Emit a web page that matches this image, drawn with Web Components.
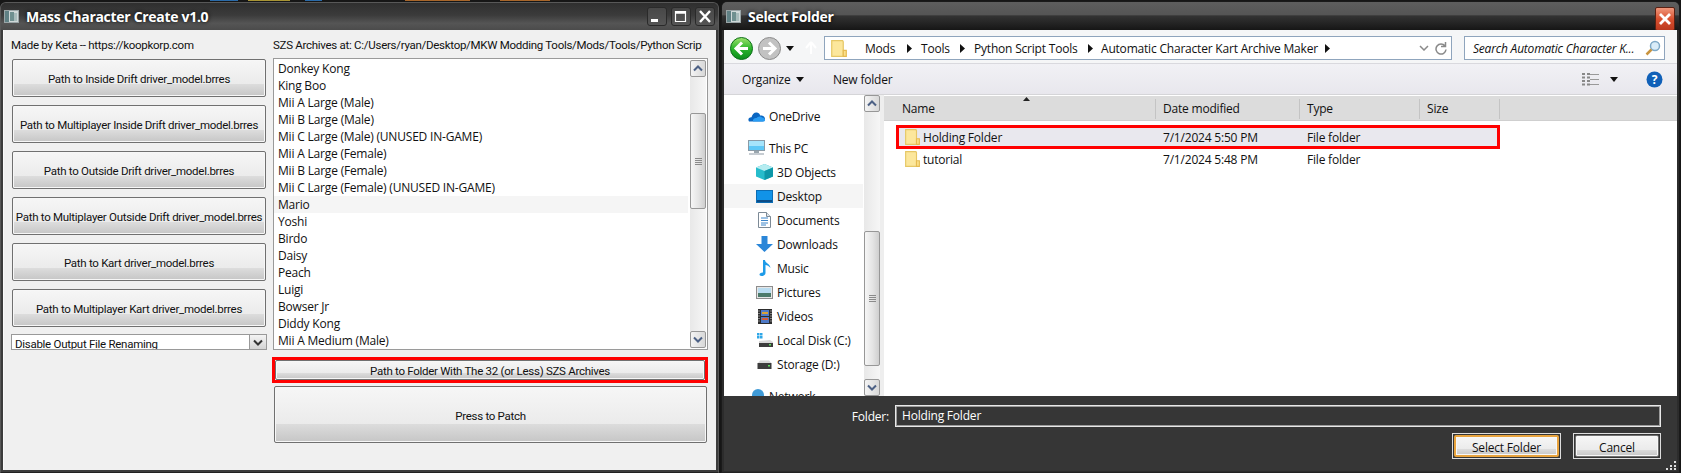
<!DOCTYPE html>
<html><head><meta charset="utf-8"><style>
html,body{margin:0;padding:0;background:#161616;overflow:hidden}
body{width:1681px;height:473px;font:12px "Open Sans","Noto Sans",sans-serif;color:#111;letter-spacing:-.2px;
 background-image:linear-gradient(90deg,transparent 210px,#2a6aa8 210px,#2a6aa8 238px,transparent 238px,transparent 248px,#a89434 248px,#a89434 290px,transparent 290px,transparent 305px,#2a6aa8 305px,#2a6aa8 322px,transparent 322px,transparent 405px,#a8662a 405px,#a8662a 470px,transparent 470px,transparent 500px,#a8662a 500px,#a8662a 550px,transparent 550px);background-size:100% 1px;background-repeat:no-repeat}
#desk{display:flex;gap:2px;height:473px;align-items:flex-start}
</style></head><body>
<div id="desk">
<win-frame width="719" title-text="Mass Character Create v1.0" variant="tool">
  <mass-app></mass-app>
</win-frame>
<win-frame width="959" title-text="Select Folder" variant="dialog">
  <folder-dialog></folder-dialog>
</win-frame>
</div>
<script>
function def(name,html,init){
  customElements.define(name,class extends HTMLElement{
    constructor(){super();this.attachShadow({mode:'open'});}
    connectedCallback(){ if(this._d)return; this._d=1;
      const f=typeof html==='function'?html(this):html;
      this.shadowRoot.innerHTML=f;
      if(init)init(this);
    }
  });
}
const appIcon=`<svg width="15" height="13" viewBox="0 0 15 13" style="flex:none"><rect width="15" height="13" fill="#9aa5a7"/><rect x="1" y="1" width="4" height="11" fill="#5f8084"/><rect x="5" y="1" width="9" height="11" fill="#cfd8d8"/><rect x="6" y="2" width="4" height="9" fill="#6f9090"/><rect x="10" y="3" width="3" height="8" fill="#a8bcbc"/></svg>`;
def('win-frame',h=>{
  const w=h.getAttribute('width'),t=h.getAttribute('title-text'),v=h.getAttribute('variant');
  const tool=v==='tool';
  const ctl=tool?`<div class="ctl">
    <span class="cb"><svg width="18" height="17" viewBox="0 0 18 17"><rect x="3" y="11" width="7" height="3" fill="#fff"/></svg></span>
    <span class="cb"><svg width="18" height="17" viewBox="0 0 18 17"><path d="M3.500 3.500h10v10h-10z" fill="none" stroke="#fff" stroke-width="1.200"/><path d="M3.500 4.500h10" stroke="#fff" stroke-width="2.400"/></svg></span>
    <span class="cb"><svg width="18" height="17" viewBox="0 0 18 17"><path d="M4 3l10 11M14 3L4 14" stroke="#fff" stroke-width="2.400" fill="none"/></svg></span>
  </div>`:`<div class="ctl d"><span class="close"><svg width="18" height="22" viewBox="0 0 18 22"><path d="M4 6l10 10M14 6L4 16" stroke="#fff" stroke-width="2.800" fill="none"/></svg></span></div>`;
  return `<style>
  :host{display:flex;flex-direction:column;flex:none;width:${w}px;box-sizing:border-box;height:${tool?471:472}px;margin-top:${tool?2:1}px;border:1px solid ${tool?'#585858':'#1a1a1a'};border-bottom-color:#222;border-radius:6px 6px 0 0;background:${tool?'#3c3c3c':'#2c2c2c'};overflow:hidden}
  .bar{flex:none;height:${tool?27:28}px;display:flex;align-items:center;padding:0 ${tool?3:4}px 0 ${tool?3:4}px;gap:7px;
    background:${tool?'linear-gradient(#2f2f2f,#3b3b3b 45%,#555 75%,#4b4b4b)':'linear-gradient(#5e5e5e,#555 45%,#333 50%,#161616)'}}
  .t{flex:1;color:#fff;font:bold 14px "Open Sans",sans-serif;letter-spacing:-.3px;text-shadow:0 0 4px #000}
  .ctl{display:flex;gap:4px;align-self:flex-start;margin-top:${tool?4:5}px}
  .cb{width:20px;height:19px;border:1px solid #2a2a2a;border-radius:3px;box-sizing:border-box;background:linear-gradient(#484848,#555);display:flex;align-items:center;justify-content:center}
  .cb svg{flex:none}
  .close{width:20px;height:24px;background:linear-gradient(#f0987c,#d9502f 50%,#bb3a20);border:1px solid #5a2113;box-sizing:border-box;border-radius:2px;display:flex;align-items:center;justify-content:center}
  .body{flex:1;min-height:0;margin:0 2px ${tool?2:1}px;display:flex;flex-direction:column;overflow:hidden}
  </style><div class="bar">${appIcon}<span class="t">${t}</span>${ctl}</div><div class="body"><slot></slot></div>`;
});
def('win-btn',()=>`<style>
  :host{display:flex;box-sizing:border-box;align-items:center;justify-content:center;padding-top:2px;border:1px solid #707070;border-radius:2px;
    background:linear-gradient(#f6f6f6,#ebebeb 68%,#dcdcdc 68%,#c6c6c6);box-shadow:inset 0 0 0 1px #f7f7f7;color:#111;white-space:nowrap}
  </style><slot></slot>`);
def('scroll-bar',h=>{
  const tt=+h.getAttribute('thumb-top'),th=+h.getAttribute('thumb-height');
  return `<style>
  :host{display:flex;flex-direction:column;flex:none;width:16px;box-sizing:border-box;background:linear-gradient(90deg,#e8e8e8,#f6f6f6);overflow:hidden}
  .b{flex:none;height:17px;border:1px solid #979797;border-radius:2px;box-sizing:border-box;background:linear-gradient(90deg,#f4f4f4,#d8d8d8);display:flex;align-items:center;justify-content:center}
  .track{flex:1;min-height:0;padding-top:${tt}px}
  .thumb{height:${th}px;border:1px solid #979797;border-radius:2px;box-sizing:border-box;background:linear-gradient(90deg,#f6f6f6,#e4e4e4 55%,#cfcfcf);display:flex;align-items:center;justify-content:center}
  </style>
  <div class="b"><svg width="10" height="7" viewBox="0 0 10 7"><path d="M1 5.500l4-4 4 4" fill="none" stroke="#4d6185" stroke-width="2"/></svg></div>
  <div class="track"><div class="thumb"><svg width="7" height="7" viewBox="0 0 7 7"><path d="M0 .5h7M0 2.500h7M0 4.500h7M0 6.500h7" stroke="#8a8a8a"/></svg></div></div>
  <div class="b"><svg width="10" height="7" viewBox="0 0 10 7"><path d="M1 1.500l4 4 4-4" fill="none" stroke="#4d6185" stroke-width="2"/></svg></div>`;
});
def('mass-app',()=>{
  const btns=['Path to Inside Drift driver_model.brres','Path to Multiplayer Inside Drift driver_model.brres','Path to Outside Drift driver_model.brres','Path to Multiplayer Outside Drift driver_model.brres','Path to Kart driver_model.brres','Path to Multiplayer Kart driver_model.brres'];
  const items=['Donkey Kong','King Boo','Mii A Large (Male)','Mii B Large (Male)','Mii C Large (Male) (UNUSED IN-GAME)','Mii A Large (Female)','Mii B Large (Female)','Mii C Large (Female) (UNUSED IN-GAME)','Mario','Yoshi','Birdo','Daisy','Peach','Luigi','Bowser Jr','Diddy Kong','Mii A Medium (Male)'];
  return `<style>
  :host{display:grid;flex:1;min-height:0;background:#f0f0f0;grid-template-columns:256px 436px;column-gap:6px;padding:0 0 0 7px;font:11.5px Roboto,"Open Sans",sans-serif;letter-spacing:-.28px;color:#111;border-left:1px solid #fafafa}
  .left,.right{display:flex;flex-direction:column;min-width:0}
  .lbl{height:28px;line-height:30px;white-space:nowrap;overflow:hidden;flex:none}
  .left .lbl{height:29px}
  .btns{display:flex;flex-direction:column;gap:8px;padding:0 1px}
  win-btn.p{height:38px}
  .combo{margin-top:7px;height:16px;border:1px solid #999;box-sizing:border-box;background:#fff;display:flex;overflow:hidden}
  .combo span{flex:1;padding-left:3px;line-height:18px;height:14px;overflow:hidden;white-space:nowrap}
  .drop{flex:none;width:16px;border-left:1px solid #999;background:linear-gradient(#f4f4f4,#d4d4d4);display:flex;align-items:center;justify-content:center}
  .listbox{height:292px;border:1px solid #9a9a9a;box-sizing:border-box;background:#fff;display:flex;width:435px;flex:none}
  .listbox scroll-bar{margin:1px 1px 1px 2px}
  .rows{flex:1;min-width:0;overflow:hidden;padding-top:1px;font:12px "Open Sans",sans-serif;letter-spacing:-.2px}
  .row{height:17px;line-height:17px;padding-left:4px;white-space:nowrap}
  .row.h{background:#f5f5f5}
  .red{margin-top:7px;border:3px solid #f00;height:26px;box-sizing:border-box;width:436px;margin-left:-1px;flex:none;display:flex}
  .red win-btn{flex:1}
  .patch{margin:3px 0 0 1px;height:57px;width:433px;flex:none}
  </style>
  <div class="left"><div class="lbl">Made by Keta -- https://koopkorp.com</div>
   <div class="btns">${btns.map(b=>`<win-btn class="p">${b}</win-btn>`).join('')}</div>
   <div class="combo"><span>Disable Output File Renaming</span><div class="drop"><svg width="10" height="7" viewBox="0 0 10 7"><path d="M1 1.500l4 4 4-4" fill="none" stroke="#333" stroke-width="2"/></svg></div></div>
  </div>
  <div class="right"><div class="lbl" style="width:429px">SZS Archives at: C:/Users/ryan/Desktop/MKW Modding Tools/Mods/Tools/Python Script Tools/Automatic</div>
   <div class="listbox"><div class="rows">${items.map(t=>`<div class="row${t==='Mario'?' h':''}">${t}</div>`).join('')}</div><scroll-bar thumb-top="36" thumb-height="96"></scroll-bar></div>
   <div class="red"><win-btn>Path to Folder With The 32 (or Less) SZS Archives</win-btn></div>
   <win-btn class="patch">Press to Patch</win-btn>
  </div>`;
});
const folder=(s=14)=>`<svg width="${Math.round(s*.93)}" height="${s}" viewBox="0 0 13 14" style="flex:none"><path d="M.5.5h9l.5 1v12H.5z" fill="#fce79c" stroke="#e6c765"/><path d="M10 8.500h2.500v5H10z" fill="#fbe08a" stroke="#e6bb50"/></svg>`;
const icons={
 onedrive:`<svg width="17" height="11" viewBox="0 0 17 11"><path d="M1 10.500c-1.500-2 0-4.500 2.500-4.300C4.500 3 6.500 1 9 1.500c1.700.3 2.800 1.500 3.200 3 2.500-.3 4.800 1.300 4.800 3.500 0 1.500-1 2.500-2.500 2.500z" fill="#0a66c2"/><path d="M5 10.500c-.5-2 1.200-3.800 3.500-3.500 1-1.500 4-2.500 5.500-.5 2 .2 3 1.400 3 2.500 0 1-.7 1.500-2 1.500z" fill="#2a9df4"/></svg>`,
 pc:`<svg width="17" height="16" viewBox="0 0 17 16"><rect x=".5" y=".5" width="16" height="10" fill="#5fc8f6" stroke="#8a9aa6"/><rect x="1" y="1" width="15" height="5" fill="#a6e4fb"/><rect x="6" y="11" width="5" height="2" fill="#9aa6ae"/><rect x="1" y="13" width="15" height="2" fill="#c6ccd2"/></svg>`,
 cube:`<svg width="17" height="16" viewBox="0 0 17 16"><path d="M8.500 0L17 3.500v9L8.500 16 0 12.500v-9z" fill="#26bccb"/><path d="M8.500 0L17 3.500 8.500 7 0 3.500z" fill="#b6ecf0"/><path d="M8.500 7L17 3.500v9L8.500 16z" fill="#0d97a8"/></svg>`,
 desk:`<svg width="17" height="13" viewBox="0 0 17 13"><rect x=".5" y=".5" width="16" height="12" fill="#1193e8" stroke="#0c6db4"/><rect x="1" y="10" width="15" height="2" fill="#0c4c86"/></svg>`,
 doc:`<svg width="13" height="16" viewBox="0 0 13 16"><path d="M.5.5h8l4 4v11H.5z" fill="#fff" stroke="#7d8a96"/><path d="M8.500.5v4h4" fill="#dfe6ec" stroke="#7d8a96"/><path d="M3 6h7M3 8.500h7M3 11h7M3 13h5" stroke="#3a84c9"/></svg>`,
 dl:`<svg width="17" height="16" viewBox="0 0 17 16"><path d="M5.500 0h6v8H17l-8.500 8L0 8h5.500z" fill="#2a86d8"/></svg>`,
 music:`<svg width="12" height="16" viewBox="0 0 12 16"><path d="M4 0h2c0 3 5 3.500 5.500 8-1.500-2-3.500-3-5-3v8c0 2-2 3-4 3S0 14.500 1 13.500s2-1 3-1z" fill="#1e9be8"/></svg>`,
 pic:`<svg width="17" height="13" viewBox="0 0 17 13"><rect x=".5" y=".5" width="16" height="12" fill="#e6e6e6" stroke="#8d8d8d"/><rect x="2" y="2" width="13" height="5" fill="#b9dcf0"/><rect x="2" y="7" width="13" height="4" fill="#4c7a6a"/></svg>`,
 vid:`<svg width="14" height="15" viewBox="0 0 14 15"><rect width="14" height="15" fill="#2d2d2d"/><rect x="3" y="1" width="8" height="6" fill="#4f7ac7"/><rect x="3" y="8" width="8" height="6" fill="#4f7ac7"/><path d="M4 4h6" stroke="#d9a136" stroke-width="2"/><path d="M4 10h6" stroke="#d25c3a" stroke-width="2"/><path d="M1 1.500v12M13 1.500v12" stroke="#ddd" stroke-dasharray="1 1.500"/></svg>`,
 c:`<svg width="16" height="14" viewBox="0 0 16 14"><path d="M0 0h2.500v2.500H0zM3 0h2.500v2.500H3zM0 3h2.500v2.500H0zM3 3h2.500v2.500H3z" fill="#2ea7e8"/><path d="M2 8l11-1 3 2v4H2z" fill="#d8d8d8"/><rect x="2" y="10" width="14" height="4" fill="#3c3c3c"/><rect x="12" y="11" width="2" height="1.500" fill="#5fe05f"/></svg>`,
 d:`<svg width="15" height="9" viewBox="0 0 15 9"><path d="M1 3l2-2.500h9L14.500 3z" fill="#d8d8d8"/><rect x=".5" y="3" width="14" height="6" fill="#3c3c3c"/><rect x="11" y="5" width="2" height="1.500" fill="#5fe05f"/></svg>`,
 net:`<svg width="17" height="16" viewBox="0 0 17 16"><circle cx="10" cy="7" r="6" fill="#3f9ad6"/><rect x="0" y="8" width="10" height="7" fill="#3f8fd0"/></svg>`
};
def('nav-pane',()=>{
  const rows=[['onedrive','OneDrive',0,11],['pc','This PC',0,31],['cube','3D Objects',1,12],['desk','Desktop',1,12,1],['doc','Documents',1,12],['dl','Downloads',1,12],['music','Music',1,12],['pic','Pictures',1,12],['vid','Videos',1,12],['c','Local Disk (C:)',1,12],['d','Storage (D:)',1,12],['net','Network',0,31]];
  return `<style>
  :host{display:block;flex:none;width:139px;height:301px;background:#fff;overflow:hidden;padding-top:9px;box-sizing:border-box;margin-right:1px}
  .r{display:flex;align-items:center;height:24px;white-space:nowrap;font-size:12px;color:#111}
  .r.h{background:#f5f5f5}
  .i{flex:none;display:flex;align-items:center;justify-content:center}
  .r.t .i{width:17px;margin-left:24px;margin-right:4px}
  .r.s .i{width:17px;margin-left:32px;margin-right:4px}
  </style>`+rows.map(r=>{
    const sp=r[3]>20?'margin-top:8px;':'';
    return `<div class="r ${r[2]?'s':'t'} ${r[4]?'h':''}" style="${sp}"><span class="i">${icons[r[0]]}</span>${r[1]}</div>`}).join('');
});
def('folder-dialog',()=>{
  const tri=()=>`<svg width="5" height="9" viewBox="0 0 5 9" style="flex:none"><path d="M0 0l5 4.500L0 9z" fill="#111"/></svg>`;
  const crumb=(t,w)=>`<b style="width:${w}px">${t}</b>`;
  const sep=(w)=>`<span style="flex:none;width:${w}px;display:flex">${tri()}</span>`;
  const caret=`<svg width="8" height="5" viewBox="0 0 8 5" style="flex:none"><path d="M0 0h8L4 5z" fill="#111"/></svg>`;
  return `<style>
  :host{display:flex;flex-direction:column;flex:1;min-height:0;font-size:12px;color:#111;background:#363636;position:relative}
  .addr{flex:none;height:34px;background:#f5f6f7;display:flex;align-items:flex-start;box-sizing:border-box;padding:6px 12px 0 6px;border-bottom:1px solid #d9d9de}
  .nav{display:flex;align-items:center;flex:none;width:94px;height:24px}
  .ad{flex:none;width:628px;height:24px;border:1px solid #8fa5bd;background:#fff;box-sizing:border-box;display:flex;align-items:center}
  .ad b{font-weight:400;white-space:nowrap;flex:none}
  .sr{flex:none;width:201px;height:24px;margin-left:12px;border:1px solid #8fa5bd;background:#fff;box-sizing:border-box;display:flex;align-items:center;padding-left:8px;font-style:italic;white-space:nowrap;overflow:hidden}
  .tools{flex:none;height:31px;background:linear-gradient(#f1f1f5,#e8e7ed);display:flex;align-items:center;padding:0 14px 0 18px;box-sizing:border-box;border-bottom:1px solid #d5d5d8;white-space:nowrap}
  .mid{flex:none;height:301px;display:flex;background:#fff}
  .gut{flex:none;width:4px;background:#eee}
  .files{flex:1;min-width:0;background:#fff;overflow:hidden}
  .head{height:25px;background:#dcdcdc;display:grid;grid-template-columns:272px 144px 120px 80px;align-items:center;position:relative;box-sizing:border-box;border-bottom:1px solid #cfcfcf;margin-top:1px;padding-top:1px}
  .head span{height:20px;line-height:20px;border-right:1px solid #c4c4c4;padding-left:7px}
  .head span:first-child{padding-left:18px}
  .sort{position:absolute;left:139px;top:1px}
  .frow{display:grid;grid-template-columns:272px 144px 120px;height:22px;align-items:center;white-space:nowrap}
  .frow .n{display:flex;align-items:center;gap:3px;padding-left:21px}
  .frow span+span{padding-left:7px}
  .sel{margin:4px 0 0 12px;width:604px;height:24px;border:3px solid #f00;box-sizing:border-box;background:#e9e8ee;grid-template-columns:257px 144px 120px}
  .sel .n{padding-left:6px}
  .tut{margin-top:-1px}
  .foot{flex:1;min-height:0;display:flex;flex-direction:column;color:#fff;padding:9px 16px 0 0;box-sizing:border-box}
  .frm{display:flex;align-items:center;justify-content:flex-end;gap:6px}
  .inp{width:766px;height:22px;border:1px solid #e8e8e8;outline:1px solid #9a9a9a;outline-offset:-2px;box-sizing:border-box;padding-left:6px;line-height:19px;color:#fff}
  .bs{display:flex;justify-content:flex-end;gap:12px;margin-top:6px;color:#111}
  .sb{width:109px;height:26px;border:1px solid #ddd;box-sizing:border-box;background:#363636;display:flex;padding:1px}
  .sb win-btn{flex:1}
  .sb.def win-btn{border:2px solid #e8a33d}
  .cb{width:88px}
  .grip{position:absolute;right:1px;bottom:1px}
  </style>
  <div class="addr">
   <div class="nav">
    <svg width="23" height="23" viewBox="0 0 23 23" style="flex:none;margin-right:5px"><defs><linearGradient id="g" x1="0" y1="0" x2="0" y2="1"><stop offset="0" stop-color="#9fe36e"/><stop offset=".5" stop-color="#2cb52c"/><stop offset="1" stop-color="#0a8c1c"/></linearGradient></defs><circle cx="11.500" cy="11.500" r="11" fill="url(#g)" stroke="#0d6f1a"/><path d="M12 5.500L6 11.500l6 6M6.500 11.500H18" fill="none" stroke="#fff" stroke-width="3"/></svg>
    <svg width="23" height="23" viewBox="0 0 23 23" style="flex:none;margin-right:5px"><circle cx="11.500" cy="11.500" r="11" fill="#c2c2c2" stroke="#8b8b8b"/><path d="M11 5.500l6 6-6 6M16.500 11.500H5" fill="none" stroke="#fff" stroke-width="3"/></svg>
    ${caret}
    <svg width="14" height="14" viewBox="0 0 14 14" style="flex:none;margin-left:10px"><path d="M7 1L2 7M7 1l5 6M7 1v12" stroke="#fff" stroke-width="2" fill="none"/></svg>
   </div>
   <div class="ad">
    <span style="margin:0 18px 0 6px;display:flex;flex:none">${folder(17)}</span>
    ${crumb('Mods',42)}${sep(14)}${crumb('Tools',39)}${sep(14)}${crumb('Python Script Tools',114)}${sep(13)}${crumb('Automatic Character Kart Archive Maker',224)}${sep(8)}
    <span style="flex:1"></span>
    <svg width="10" height="6" viewBox="0 0 10 6" style="flex:none;margin-right:6px"><path d="M1 1l4 4 4-4" fill="none" stroke="#8a8a8a" stroke-width="1.500"/></svg>
    <svg width="12" height="13" viewBox="0 0 12 13" style="flex:none;margin-right:4px"><path d="M10 4A5 5 0 1 0 11 7.500M10.500 0v4.500H6" fill="none" stroke="#8a8a8a" stroke-width="1.500"/></svg>
   </div>
   <div class="sr"><span style="flex:1;overflow:hidden">Search Automatic Character K...</span>
    <svg width="16" height="16" viewBox="0 0 16 16" style="flex:none;margin:0 3px"><circle cx="10" cy="6" r="4.500" fill="#d9ecf8" stroke="#7ea8c6" stroke-width="1.500"/><path d="M6.500 9.500L1.500 14.500" stroke="#c9943f" stroke-width="2.500"/></svg></div>
  </div>
  <div class="tools">
   <span style="width:54px;flex:none">Organize</span>${caret}<span style="width:29px;flex:none"></span><span>New folder</span>
   <span style="flex:1"></span>
   <svg width="17" height="15" viewBox="0 0 17 15" style="flex:none"><path d="M1.500 1v13M6.500 1v13" stroke="#888" stroke-dasharray="2 1.500" stroke-width="3"/><path d="M8 2.500h9M8 7.500h9M8 12.500h9" stroke="#999"/></svg>
   <span style="width:11px;flex:none"></span>${caret}<span style="width:28px;flex:none"></span>
   <svg width="17" height="17" viewBox="0 0 17 17" style="flex:none"><circle cx="8.500" cy="8.500" r="8" fill="#1060b8"/><text x="8.500" y="13" text-anchor="middle" font-family="Open Sans" font-weight="700" font-size="12" fill="#fff">?</text></svg>
  </div>
  <div class="mid">
   <nav-pane></nav-pane>
   <scroll-bar thumb-top="119" thumb-height="135"></scroll-bar>
   <div class="gut"></div>
   <div class="files">
    <div class="head"><span>Name</span><span>Date modified</span><span>Type</span><span>Size</span>
     <svg class="sort" width="7" height="4" viewBox="0 0 7 4"><path d="M0 4l3.500-4L7 4z" fill="#222"/></svg></div>
    <div class="frow sel"><span class="n">${folder(16)}<span style="padding:0">Holding Folder</span></span><span>7/1/2024 5:50 PM</span><span>File folder</span></div>
    <div class="frow tut"><span class="n">${folder(16)}<span style="padding:0">tutorial</span></span><span>7/1/2024 5:48 PM</span><span>File folder</span></div>
   </div>
  </div>
  <div class="foot">
   <div class="frm"><span>Folder:</span><div class="inp">Holding Folder</div></div>
   <div class="bs"><div class="sb def"><win-btn>Select Folder</win-btn></div><div class="sb cb"><win-btn>Cancel</win-btn></div></div>
  </div>
  <svg class="grip" width="10" height="10" viewBox="0 0 10 10"><path d="M8 1h2v2H8zM4 5h2v2H4zM8 5h2v2H8zM0 8h2v2H0zM4 8h2v2H4zM8 8h2v2H8z" fill="#ddd"/></svg>`;
});
</script>
</body></html>
